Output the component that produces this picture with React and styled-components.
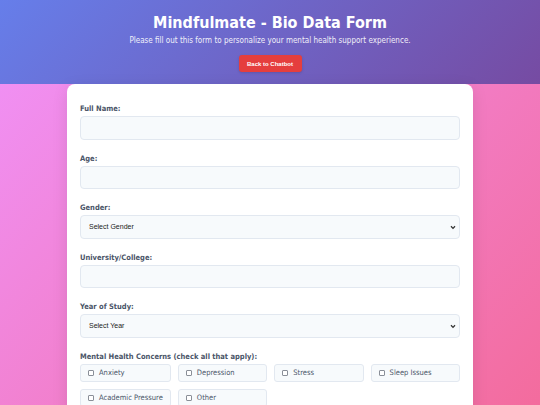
import React from "react";
import styled, { createGlobalStyle } from "styled-components";

const Global = createGlobalStyle`
  * { box-sizing: border-box; }
  html, body { margin: 0; padding: 0; }
  body {
    font-family: "DejaVu Sans Condensed", "DejaVu Sans", Verdana, sans-serif;
    font-stretch: condensed;
    background: linear-gradient(135deg, #f093fb 0%, #f5576c 100%);
    min-height: 900px;
  }
`;

const Page = styled.div`
  display: flex;
  flex-direction: column;
  min-height: 900px;
`;

const Header = styled.header`
  height: 84px;
  background: linear-gradient(135deg, #667eea 0%, #764ba2 100%);
  color: #fff;
  display: flex;
  flex-direction: column;
  align-items: center;
  padding-top: 13px;
`;

const Title = styled.h1`
  margin: 0;
  font-size: 16px;
  font-weight: 700;
  line-height: 20px;
`;

const Subtitle = styled.p`
  margin: 2px 0 0;
  font-size: 8px;
  line-height: 11px;
  opacity: 0.9;
`;

const BackButton = styled.button`
  margin-top: 9px;
  width: 63px;
  height: 17px;
  border: none;
  border-radius: 3px;
  background: #e53e3e;
  color: #fff;
  font-family: "Liberation Sans", Arial, sans-serif;
  font-size: 6px;
  font-weight: 700;
  padding: 0;
  box-shadow: 0 1px 3px rgba(0, 0, 0, 0.15);
`;

const Card = styled.form`
  width: 406px;
  margin: 0 auto;
  background: #fff;
  border-radius: 8px;
  padding: 20px 13px 20px;
  box-shadow: 0 4px 16px rgba(0, 0, 0, 0.1);
  display: flex;
  flex-direction: column;
  gap: 14px;
`;

const Field = styled.div`
  display: flex;
  flex-direction: column;
  gap: 2px;
`;

const Label = styled.label`
  font-size: 7.5px;
  line-height: 10px;
  font-weight: 700;
  color: #4a5568;
`;

const Input = styled.input`
  height: 23.5px;
  width: 100%;
  background: #f7fafc;
  border: 1px solid #e2e8f0;
  border-radius: 4px;
  padding: 0 8px;
  font-size: 8px;
`;

const SelectBox = styled.div`
  position: relative;
  height: 23.5px;
  background: #f7fafc;
  border: 1px solid #e2e8f0;
  border-radius: 4px;
  display: flex;
  align-items: center;
  padding: 0 8px;
  font-family: "Liberation Sans", Arial, sans-serif;
  font-stretch: normal;
  font-size: 7px;
  color: #222;
`;

const Chevron = styled.svg`
  position: absolute;
  right: 3px;
  top: 9px;
`;

const Grid = styled.div`
  display: grid;
  grid-template-columns: repeat(4, 1fr);
  gap: 6.5px 7px;
`;

const CheckItem = styled.div`
  height: 18.5px;
  background: #f7fafc;
  border: 1px solid #e2e8f0;
  border-radius: 3px;
  display: flex;
  align-items: center;
  padding: 0 7px;
  gap: 5px;
  font-size: 7.5px;
  color: #4a5568;
  white-space: nowrap;
`;

const Box = styled.span`
  width: 6px;
  height: 6px;
  border: 1px solid #8a8f98;
  border-radius: 1px;
  background: #fff;
  flex-shrink: 0;
`;

function Select({ text }) {
  return (
    <SelectBox>
      {text}
      <Chevron width="6" height="5" viewBox="0 0 6 5">
        <path d="M1 1.2 L3 3.4 L5 1.2" stroke="#333" strokeWidth="1.3" fill="none" />
      </Chevron>
    </SelectBox>
  );
}

const concerns = [
  "Anxiety",
  "Depression",
  "Stress",
  "Sleep Issues",
  "Academic Pressure",
  "Other",
];

export default function App() {
  return (
    <Page>
      <Global />
      <Header>
        <Title>Mindfulmate - Bio Data Form</Title>
        <Subtitle>Please fill out this form to personalize your mental health support experience.</Subtitle>
        <BackButton type="button">Back to Chatbot</BackButton>
      </Header>
      <Card>
        <Field>
          <Label>Full Name:</Label>
          <Input />
        </Field>
        <Field>
          <Label>Age:</Label>
          <Input />
        </Field>
        <Field>
          <Label>Gender:</Label>
          <Select text="Select Gender" />
        </Field>
        <Field>
          <Label>University/College:</Label>
          <Input />
        </Field>
        <Field>
          <Label>Year of Study:</Label>
          <Select text="Select Year" />
        </Field>
        <Field>
          <Label>Mental Health Concerns (check all that apply):</Label>
          <Grid>
            {concerns.map((c) => (
              <CheckItem key={c}>
                <Box />
                {c}
              </CheckItem>
            ))}
          </Grid>
        </Field>
      </Card>
    </Page>
  );
}
